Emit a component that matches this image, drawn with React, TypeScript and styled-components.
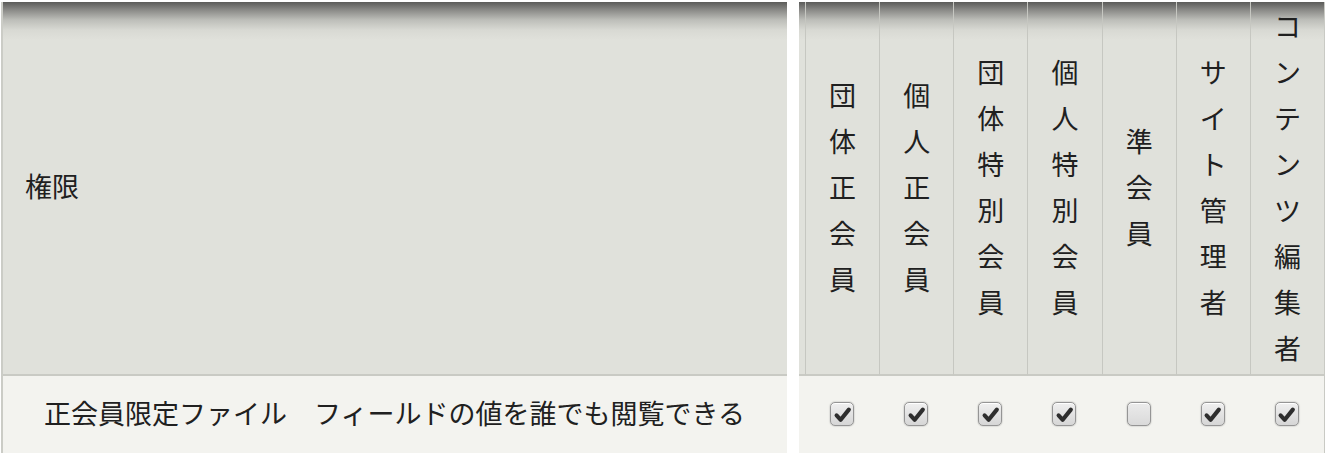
import * as React from 'react';
import styled, { createGlobalStyle } from 'styled-components';

const roles = [
  { label: '団体正会員', checked: true },
  { label: '個人正会員', checked: true },
  { label: '団体特別会員', checked: true },
  { label: '個人特別会員', checked: true },
  { label: '準会員', checked: false },
  { label: 'サイト管理者', checked: true },
  { label: 'コンテンツ編集者', checked: true }
];

const GlobalStyle = createGlobalStyle`
  *, *::before, *::after {
    box-sizing: border-box;
  }

  body {
    margin: 0;
    background: #fff;
  }
`;

const headShade = `
  background-color: #e0e1db;
  background-image: linear-gradient(
    to bottom,
    #5b5b59 0px,
    #8a8a87 8px,
    #bdbeb9 18px,
    #d8d9d3 28px,
    #e0e1db 38px
  );
`;

const Page = styled.div`
  display: flex;
  gap: 12px;
  padding: 2px 0 0 1px;
  font-family: 'Noto Sans CJK JP', 'Noto Sans', sans-serif;
  font-size: 27px;
  color: #202020;
`;

const LeftTable = styled.div`
  width: 786px;
  border-left: 2px solid #cbccc6;
  display: flex;
  flex-direction: column;
`;

const LeftHead = styled.div`
  ${headShade}
  height: 374px;
  border-bottom: 2px solid #c9cac4;
  display: flex;
  align-items: center;
  padding: 0 0 5px 22px;
`;

const LeftBody = styled.div`
  height: 77px;
  background: #f3f3ef;
  display: flex;
  align-items: center;
  padding: 0 0 4px 41px;
  white-space: pre;
`;

const RightTable = styled.div`
  width: 526px;
  border-right: 1px solid #c9cac4;
  display: grid;
  grid-template-columns: 6px repeat(7, 1fr);
  grid-template-rows: 374px 77px;
`;

const HeadCell = styled.div<{ $edge?: boolean }>`
  ${headShade}
  border-bottom: 2px solid #c9cac4;
  border-left: ${(p) => (p.$edge ? 'none' : '1px solid #c6c7c1')};
  display: flex;
  align-items: center;
  justify-content: center;
  padding-bottom: 3px;
`;

const VerticalLabel = styled.span`
  display: block;
  width: 1em;
  line-height: 46px;
  line-break: anywhere;
  word-break: break-all;
  text-align: center;
`;

const BodyCell = styled.div`
  background: #f3f3ef;
  display: flex;
  align-items: center;
  justify-content: center;
  padding-bottom: 1px;
`;

const Box = styled.span<{ $checked: boolean }>`
  width: 24px;
  height: 24px;
  border: 1px solid #959595;
  border-radius: 5px;
  background: ${(p) =>
    p.$checked
      ? 'linear-gradient(to bottom, #f0f0f0, #d6d6d6)'
      : 'linear-gradient(to bottom, #ebebeb, #dadada)'};
  box-shadow: 0 0 1.5px rgba(0, 0, 0, 0.4), inset 0 1px 0 #fff;
  display: flex;
  align-items: center;
  justify-content: center;

  svg {
    width: 19px;
    height: 19px;
  }
`;

const Checkbox = ({ checked }: { checked: boolean }) => (
  <Box $checked={checked}>
    {checked && (
      <svg viewBox="0 0 18 18">
        <path
          d="M3.4 9.8 L7.3 14 L15 4.4"
          fill="none"
          stroke="#2e2e2e"
          strokeWidth="3.9"
          strokeLinecap="round"
          strokeLinejoin="round"
        />
      </svg>
    )}
  </Box>
);

export default function App() {
  return (
    <>
      <GlobalStyle />
      <Page>
        <LeftTable>
          <LeftHead>権限</LeftHead>
          <LeftBody>正会員限定ファイル　フィールドの値を誰でも閲覧できる</LeftBody>
        </LeftTable>
        <RightTable>
          <HeadCell $edge />
          {roles.map((r) => (
            <HeadCell key={r.label}>
              <VerticalLabel>{r.label}</VerticalLabel>
            </HeadCell>
          ))}
          <BodyCell />
          {roles.map((r) => (
            <BodyCell key={r.label}>
              <Checkbox checked={r.checked} />
            </BodyCell>
          ))}
        </RightTable>
      </Page>
    </>
  );
}
